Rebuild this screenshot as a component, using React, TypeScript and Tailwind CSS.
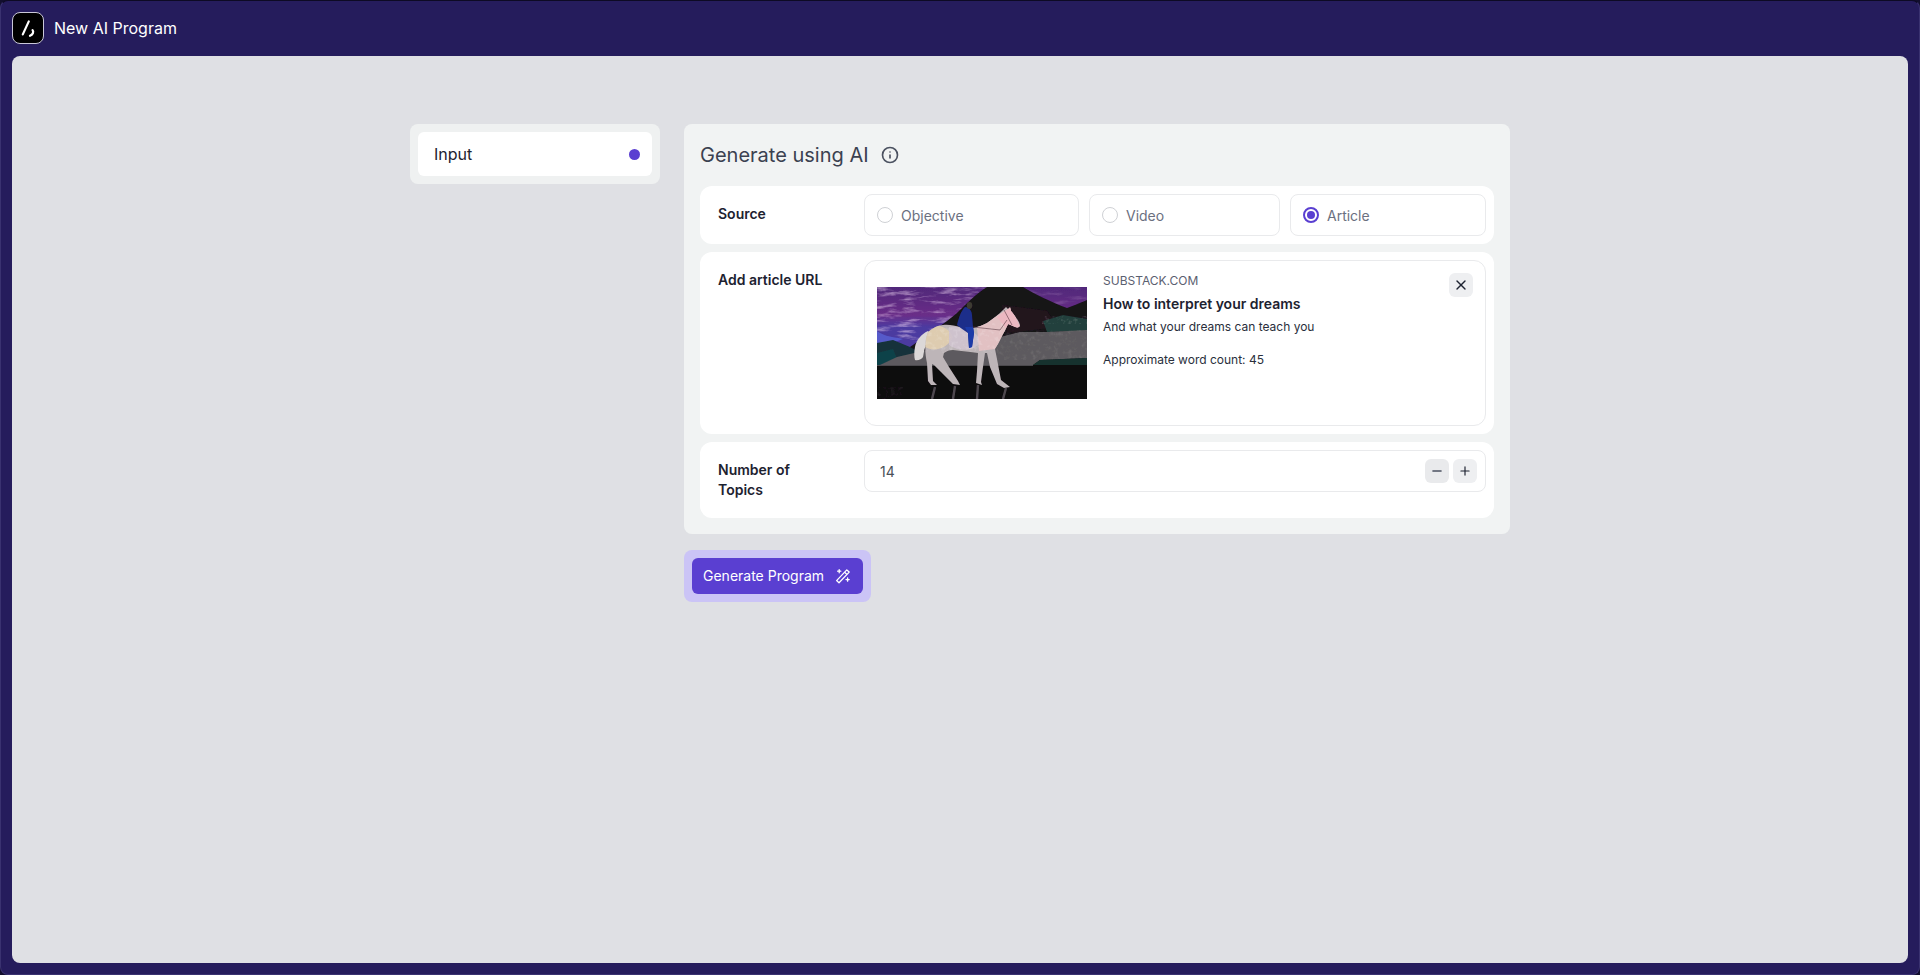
import React from "react";
import { Info, Minus, Plus, X } from "lucide-react";

const font = { fontFamily: "Inter, 'Liberation Sans', sans-serif" };

const horse =
  "M51 45 C56 41 61 38 66 38 C72 37 78 39 83 40 C88 41 92 42 96 41 C101 40 106 38 110 36 C116 32 122 27 126 23 L129 20 L131 22 L133 20 L134 24 C138 29 142 34 143 38 C143 41 139 41 136 39 L131 37 C129 42 126 47 124 51 C122 55 120 59 118 62 L120 72 L124 93 L133 100 L127 101 L120 97 L113 80 L110 66 L108 66 L106 80 L104 95 L105 98 L99 96 L100 84 L101 66 C94 65 84 64 76 63 C72 63 70 64 67 66 L66 70 L72 80 L81 94 L83 98 L76 97 L64 85 L57 78 L55 77 L56 94 L60 98 L54 98 L51 94 L50 76 C48 66 47 56 51 45Z";

function Painting() {
  return (
    <svg viewBox="0 0 210 112" className="w-[210px] h-[112px] block">
      <defs>
        <linearGradient id="sky" x1="0" y1="0" x2="0" y2="1">
          <stop offset="0" stopColor="#50287a" />
          <stop offset="0.35" stopColor="#6a2d88" />
          <stop offset="0.5" stopColor="#4c3aa0" />
        </linearGradient>
        <filter id="grain" x="0" y="0" width="100%" height="100%">
          <feTurbulence type="fractalNoise" baseFrequency="0.05 0.22" numOctaves="4" seed="11" />
          <feColorMatrix values="0 0 0 0 0.9  0 0 0 0 0.72  0 0 0 0 0.92  2 0 0 0 -1" />
        </filter>
        <filter id="speck" x="0" y="0" width="100%" height="100%">
          <feTurbulence type="fractalNoise" baseFrequency="0.22" numOctaves="3" seed="3" />
          <feColorMatrix values="0 0 0 0 1  0 0 0 0 1  0 0 0 0 1  2 0 0 0 -1" />
        </filter>
        <filter id="soft">
          <feGaussianBlur stdDeviation="0.45" />
        </filter>
        <clipPath id="horseClip">
          <path d={horse} />
        </clipPath>
      </defs>
      <g filter="url(#soft)">
        <rect width="210" height="80" fill="url(#sky)" />
        <rect width="110" height="56" fill="#fff" filter="url(#grain)" opacity="0.8" />
        <path d="M0 44 C8 50 18 50 26 52 L10 58 L0 58Z" fill="#5a66d8" opacity="0.75" />
        <rect x="146" width="64" height="22" fill="#fff" filter="url(#grain)" opacity="0.25" />

        {/* dark mountain */}
        <path d="M33 60 C48 50 68 36 80 26 C90 16 100 6 110 0 L146 0 C158 7 174 15 190 21 L198 18 L210 13 L210 78 L33 78Z" fill="#181219" />
        <path d="M125 18 L170 24 L180 40 L130 46Z" fill="#2a1420" opacity="0.6" />
        <path d="M166 34 L186 28 L210 32 L210 44 L170 45Z" fill="#22403c" />
        <path d="M0 56 L16 53 L33 60 L44 66 L20 74 L3 78 L0 78Z" fill="#15323a" />
        <path d="M0 66 L16 62 L20 72 L3 78 L0 78Z" fill="#0f4a50" opacity="0.7" />

        {/* grey hills */}
        <path d="M3 78 L20 70 L50 63 L90 62 C104 58 114 52 123 50 L143 45 L170 45 L210 43 L210 71 L163 73 L156 78Z" fill="#5d5a5e" />
        <rect x="120" y="43" width="90" height="30" fill="#fff" filter="url(#speck)" opacity="0.12" />
        <path d="M156 78 L163 73 L210 71 L210 78Z" fill="#17332f" />
        <rect x="165" y="29" width="45" height="8" fill="#fff" filter="url(#speck)" opacity="0.25" />

        {/* water */}
        <rect y="78" width="210" height="34" fill="#0e0a0e" />
        <rect y="78" width="156" height="1" fill="#77747a" opacity="0.6" />
        <path d="M58 100 L55 112 M78 99 L76 112 M101 98 L100 112 M129 101 L126 112" stroke="#8f8a92" strokeWidth="2.4" opacity="0.5" />
        <rect y="100" width="26" height="12" fill="#fff" filter="url(#speck)" opacity="0.1" />

        {/* tail */}
        <path d="M51 44 C44 47 39 54 38 60 C37 65 37 70 38 73 C41 74 45 72 46 70 C47 66 47 58 54 50Z" fill="#dcd8d8" />

        {/* horse */}
        <path d={horse} fill="#bdb5b8" />
        <g clipPath="url(#horseClip)">
          <path d="M50 40 C60 36 72 40 76 50 C72 60 58 66 48 60Z" fill="#e6d2ae" opacity="0.8" />
          <path d="M72 40 C84 38 100 44 104 54 C98 66 80 64 72 58Z" fill="#cfc3cf" opacity="0.9" />
          <path d="M100 40 C112 34 124 26 134 20 L144 42 L126 50 L118 62 L102 64Z" fill="#e6c2c4" opacity="0.9" />
          <path d="M120 30 L134 20 L144 42 L128 40Z" fill="#eeb5c0" opacity="0.8" />
          <rect x="45" y="36" width="90" height="30" fill="#fff" filter="url(#speck)" opacity="0.3" />
        </g>
        <path d="M127 23 L135 38 M96 40 L123 43 M123 43 L130 33" stroke="#5b3b45" strokeWidth="0.6" fill="none" />

        {/* rider */}
        <path d="M80 38 C82 30 84 24 88 20 C92 20 95 24 95 28 L96 40 L97 46 L95 60 L92 61 L91 46 C87 43 83 41 80 38Z" fill="#1f2f8a" />
        <path d="M88 40 L96 40 L97 46 L95 60 L92 61 L91 46Z" fill="#1b3aa8" />
        <ellipse cx="92.5" cy="18.5" rx="2.8" ry="3.4" fill="#3d3a30" />
      </g>
    </svg>
  );
}

function WandIcon() {
  return (
    <svg viewBox="0 0 16 16" className="w-4 h-4" fill="none" stroke="#fff" strokeWidth="1.3" strokeLinejoin="round">
      <path d="M1.6 12.6 L11.8 1.9 L14.2 4.1 L4 14.8Z" />
      <path d="M9.6 4.2 L11.9 6.4" />
      <path d="M4.2 1.6 V4.8 M2.6 3.2 H5.8" strokeLinecap="round" />
      <path d="M12.6 10 V13.2 M11 11.6 H14.2" strokeLinecap="round" />
    </svg>
  );
}

function Radio({ label, width, checked }: { label: string; width: string; checked?: boolean }) {
  return (
    <div className={`flex items-center gap-2 h-[42px] pl-3 bg-white border border-[#e9eaec] rounded-lg ${width}`}>
      {checked ? (
        <span className="w-4 h-4 rounded-full bg-white border-[2px] border-[#5a3fd1] flex items-center justify-center">
          <span className="w-2 h-2 rounded-full bg-[#5a3fd1]" />
        </span>
      ) : (
        <span className="w-4 h-4 rounded-full bg-white border border-[#cfd1d5]" />
      )}
      <span className="text-sm text-[#6b7080] pt-0.5">{label}</span>
    </div>
  );
}

function Row({ label, children }: { label: React.ReactNode; children: React.ReactNode }) {
  return (
    <div className="flex items-start bg-white rounded-xl pl-[18px] pr-2 py-2">
      <div className="w-[146px] shrink-0 pt-2.5 text-sm leading-5 font-semibold text-[#1d2230]">{label}</div>
      <div className="flex-1 min-w-0">{children}</div>
    </div>
  );
}

export default function App() {
  return (
    <div style={font} className="w-screen h-screen bg-[#120e2e] overflow-hidden">
      <div className="h-full flex flex-col bg-[#251c5c] rounded-lg border border-[#3a3270] border-t-[#0d0a24]">
        <header className="h-[54px] mb-px shrink-0 flex items-center gap-2.5 px-[11px]">
          <div className="w-8 h-8 rounded-lg bg-black border border-[#c9c7d8] flex items-center justify-center">
            <svg viewBox="0 0 32 32" className="w-8 h-8 shrink-0">
              <path d="M16.8 9.4 L10.8 22.4" stroke="#fff" strokeWidth="2.2" strokeLinecap="round" fill="none" />
              <path d="M20.6 18.2 C21.8 19.6 21.2 22.4 18 23.8" stroke="#fff" strokeWidth="2.2" strokeLinecap="round" fill="none" />
            </svg>
          </div>
          <span className="text-base text-white">New AI Program</span>
        </header>

        <main className="flex-1 mx-[11px] mb-[11px] rounded-lg bg-[#dfe0e4] flex justify-center pt-[68px]">
          <div className="w-[1100px] flex items-start gap-6">
            <aside className="w-[250px] shrink-0 bg-[#eff1f1] rounded-lg p-2">
              <div className="h-11 bg-white rounded-md flex items-center justify-between pl-4 pr-3">
                <span className="text-base text-[#1d2230]">Input</span>
                <span className="w-[11px] h-[11px] rounded-full bg-[#5a3fd1]" />
              </div>
            </aside>

            <div className="flex-1 min-w-0">
              <section className="bg-[#f1f3f3] rounded-lg p-4 pt-0">
                <div className="h-[62px] flex items-center gap-3">
                  <h1 className="text-xl text-[#3b4150]">Generate using AI</h1>
                  <Info className="w-[18px] h-[18px] text-[#4b5160]" strokeWidth={2.2} />
                </div>
                <div className="flex flex-col gap-2">
                  <Row label="Source">
                    <div className="flex gap-2.5">
                      <Radio label="Objective" width="w-[215px]" />
                      <Radio label="Video" width="w-[191px]" />
                      <Radio label="Article" width="w-[196px]" checked />
                    </div>
                  </Row>
                  <Row label="Add article URL">
                    <div className="relative h-[166px] bg-white border border-[#e9eaec] rounded-xl flex items-center pl-3 gap-4">
                      <Painting />
                      <div className="self-start pt-2.5">
                        <div className="text-xs leading-5 text-[#5b6070]">SUBSTACK.COM</div>
                        <div className="text-sm leading-5 mt-[3px] font-semibold text-[#1d2230]">How to interpret your dreams</div>
                        <div className="text-xs leading-4 mt-[5px] text-[#2a2f3c]">And what your dreams can teach you</div>
                        <div className="text-xs leading-4 mt-[17px] text-[#2a2f3c]">Approximate word count: 45</div>
                      </div>
                      <button className="absolute top-3 right-3 w-6 h-6 rounded-md bg-[#eeeff1] flex items-center justify-center">
                        <X className="w-4 h-4 text-[#1d2230]" />
                      </button>
                    </div>
                  </Row>
                  <Row label={<div className="pb-2.5">Number of<br />Topics</div>}>
                    <div className="h-[42px] bg-white border border-[#e9eaec] rounded-lg flex items-center justify-between pl-[15px] pr-2">
                      <span className="text-sm text-[#4b5058] pt-0.5">14</span>
                      <div className="flex gap-1">
                        <button className="w-6 h-6 rounded-md bg-[#e9eaec] flex items-center justify-center">
                          <Minus className="w-3.5 h-3.5 text-[#4b5160]" strokeWidth={2.4} />
                        </button>
                        <button className="w-6 h-6 rounded-md bg-[#eeeff1] flex items-center justify-center">
                          <Plus className="w-3.5 h-3.5 text-[#1d2230]" />
                        </button>
                      </div>
                    </div>
                  </Row>
                </div>
              </section>

              <div className="mt-4 inline-block bg-[#cbc4f6] rounded-lg p-2">
                <button className="h-9 w-[171px] rounded-md bg-[#5a3fd1] flex items-center justify-between pl-[11px] pr-[12px] text-sm text-white">
                  Generate Program
                  <WandIcon />
                </button>
              </div>
            </div>
          </div>
        </main>
      </div>
    </div>
  );
}
